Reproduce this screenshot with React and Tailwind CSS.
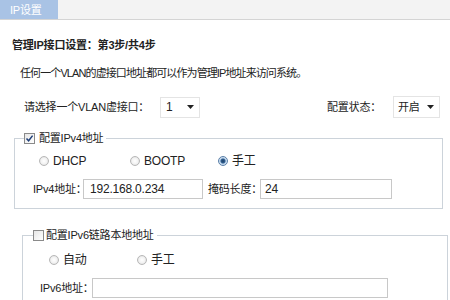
const Radio = ({ checked }) => (
  <span
    className={`inline-block h-[10px] w-[10px] shrink-0 rounded-full border ${
      checked
        ? "border-[#5a7fa8] bg-[radial-gradient(circle,#1d3f66_0,#2f5d8e_2px,#bcd3ea_3px,#e8f0f8_5px)]"
        : "border-[#b8b8b8] bg-[radial-gradient(circle,#ffffff_0,#f2f2f2_3px,#d8d8d8_5px)]"
    }`}
  />
);

const Check = ({ checked }) => (
  <span className="flex h-[11px] w-[11px] shrink-0 items-center justify-center border border-[#8a8a8a] bg-[linear-gradient(135deg,#e6e6e6,#ffffff)]">
    {checked && (
      <svg width="9" height="9" viewBox="0 0 9 9">
        <path d="M1.5 4.5 L3.6 6.8 L7.6 1.6" fill="none" stroke="#1f3f78" strokeWidth="1.5" />
      </svg>
    )}
  </span>
);

const Arrow = () => (
  <svg width="7" height="4" viewBox="0 0 7 4" className="shrink-0">
    <path d="M0 0 H7 L3.5 4 Z" fill="#222" />
  </svg>
);

const Option = ({ checked, label, className = "" }) => (
  <div className={`flex items-center gap-[4px] ${className}`}>
    <Radio checked={checked} />
    <span className="text-[12px]">{label}</span>
  </div>
);

export default function App() {
  return (
    <div className="h-[300px] w-[450px] overflow-hidden whitespace-nowrap bg-white text-[11px] leading-[14px] tracking-[-0.2px] text-[#222] [font-family:'Liberation_Sans','Noto_Sans_CJK_SC',sans-serif]">
      <div className="flex h-[20px] border-b border-[#d4d4d4] bg-[#f3f3f3]">
        <div className="flex w-[58px] items-center bg-[#a9c3e5] pl-[10px] text-white">IP设置</div>
      </div>

      <div className="mt-[18px] h-[14px] pl-[12px] font-bold">管理IP接口设置：第3步/共4步</div>
      <div className="mt-[14px] h-[14px] pl-[20px] tracking-[-0.9px]">任何一个VLAN的虚接口地址都可以作为管理IP地址来访问系统。</div>

      <div className="mt-[16px] flex h-[22px] items-center pl-[24px] pr-[10px]">
        <span className="w-[136px] shrink-0">请选择一个VLAN虚接口：</span>
        <div className="flex h-[21px] w-[40px] items-center justify-between border border-[#e4e4e4] pl-[5px] pr-[5px] text-[12px]">
          <span>1</span>
          <Arrow />
        </div>
        <span className="ml-auto mr-[12px]">配置状态：</span>
        <div className="flex h-[22px] w-[47px] items-center justify-between border border-[#e4e4e4] pl-[4px] pr-[5px]">
          <span>开启</span>
          <Arrow />
        </div>
      </div>

      <fieldset className="ml-[14px] mt-[12px] w-[429px] border border-[#ccd3da] pb-[9px]">
        <legend className="ml-[9px] flex h-[16px] items-center gap-[4px] pr-[3px]">
          <Check checked />
          <span>配置IPv4地址</span>
        </legend>
        <div className="mt-[8px] flex h-[14px] items-center pl-[24px]">
          <Option checked={false} label="DHCP" className="w-[91px]" />
          <Option checked={false} label="BOOTP" className="w-[88px]" />
          <Option checked label="手工" />
        </div>
        <div className="mt-[11px] flex h-[20px] items-center pl-[18px]">
          <span className="w-[50px] shrink-0">IPv4地址：</span>
          <div className="flex h-[20px] w-[120px] shrink-0 items-center border border-[#c8c8c8] pl-[6px] text-[12px]">192.168.0.234</div>
          <span className="ml-[5px] w-[52px] shrink-0">掩码长度：</span>
          <div className="flex h-[20px] w-[132px] shrink-0 items-center border border-[#c8c8c8] pl-[4px] text-[12px]">24</div>
        </div>
      </fieldset>

      <fieldset className="ml-[22px] mt-[18px] w-[426px] border border-[#ccd3da] pb-[9px]">
        <legend className="ml-[10px] flex h-[16px] items-center gap-[2px] pr-[3px]">
          <Check checked={false} />
          <span>配置IPv6链路本地地址</span>
        </legend>
        <div className="mt-[10px] flex h-[14px] items-center pl-[26px]">
          <Option checked={false} label="自动" className="w-[88px]" />
          <Option checked={false} label="手工" />
        </div>
        <div className="mt-[11px] flex h-[20px] items-center pl-[17px]">
          <span className="w-[52px] shrink-0">IPv6地址：</span>
          <div className="h-[20px] w-[296px] shrink-0 border border-[#c8c8c8]" />
        </div>
      </fieldset>
    </div>
  );
}
